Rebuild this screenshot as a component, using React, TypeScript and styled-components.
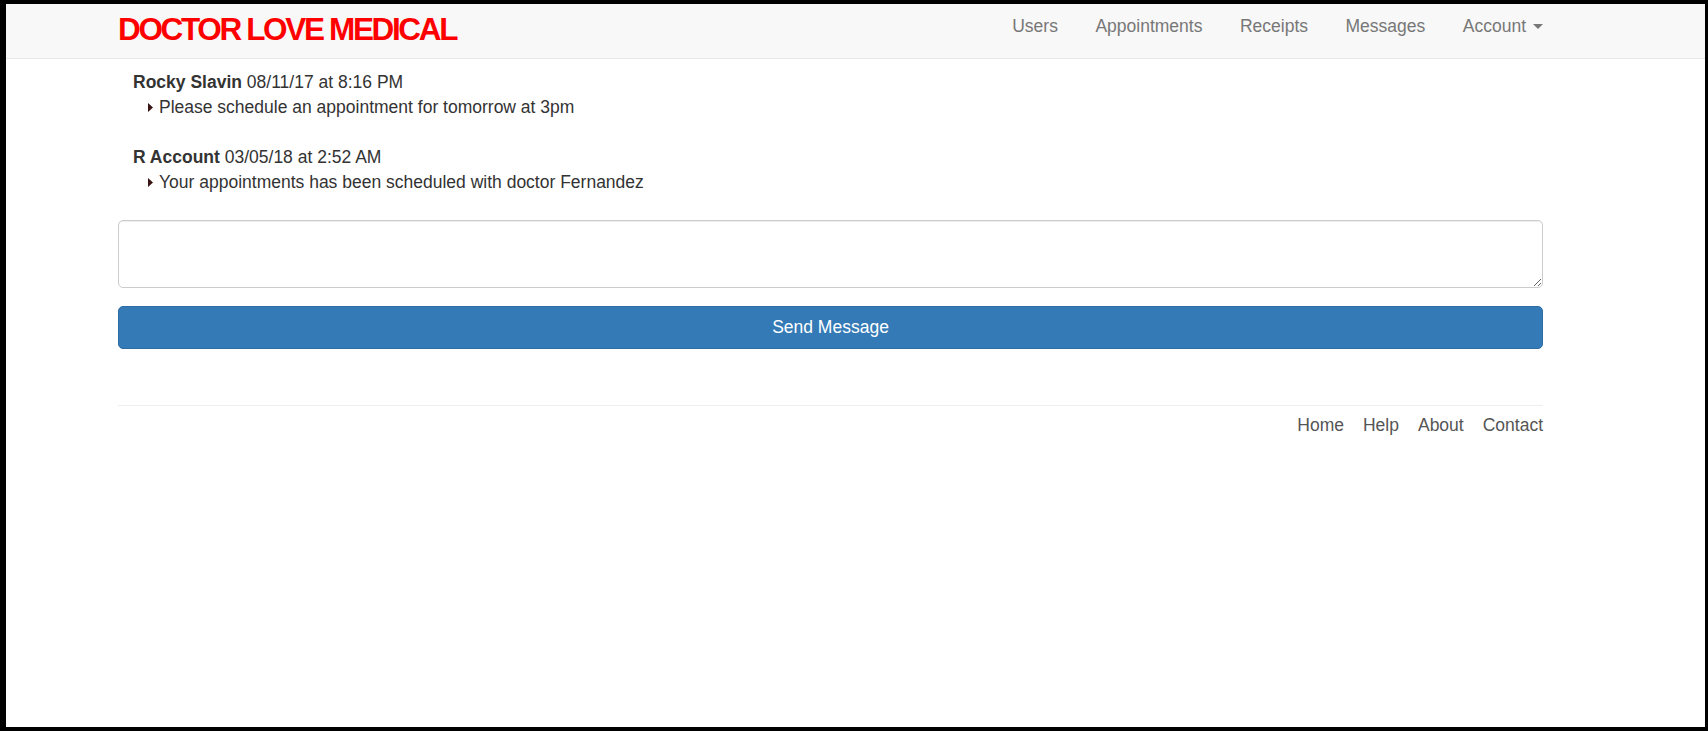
import React from "react";
import styled, { createGlobalStyle } from "styled-components";

const Global = createGlobalStyle`
  html, body { margin: 0; padding: 0; background: #ffffff; }
  body { font-family: "Liberation Sans", Arial, sans-serif; font-size: 17.5px; line-height: 25px; color: #333333; }
  * { box-sizing: border-box; }
`;

const Frame = styled.div`
  width: 1708px;
  height: 731px;
  border-style: solid;
  border-color: #000000;
  border-width: 4px 3px 4px 6px;
  background: #ffffff;
  overflow: hidden;
`;

const NavBar = styled.nav`
  height: 55px;
  background: #f8f8f8;
  border-bottom: 1px solid #e7e7e7;
`;

const Container = styled.div`
  margin-left: 112px;
  width: 1425px;
`;

const NavInner = styled(Container)`
  display: flex;
  justify-content: space-between;
  align-items: flex-start;
  padding-top: 9px;
`;

const Brand = styled.a`
  font-family: "Liberation Sans", Arial, sans-serif;
  font-weight: 700;
  font-size: 31.5px;
  letter-spacing: -2.35px;
  line-height: 30px;
  color: #ff0000;
  text-decoration: none;
  margin-top: 1px;
`;

const NavLinks = styled.ul`
  display: flex;
  list-style: none;
  margin: 0;
  padding: 0;
  gap: 37.5px;
  margin-top: 1px;
`;

const NavLink = styled.li`
  color: #777777;
  font-size: 17.5px;
  line-height: 25px;
  display: flex;
  align-items: center;
`;

const Caret = styled.span`
  display: inline-block;
  width: 0;
  height: 0;
  margin-left: 7px;
  border-top: 5px solid #777777;
  border-left: 5px solid transparent;
  border-right: 5px solid transparent;
`;

const MessageList = styled.div`
  padding: 11px 0 0 15px;
`;

const MessageItem = styled.div`
  margin-bottom: 25px;
`;

const MessageHead = styled.div`
  line-height: 25px;
`;

const Sender = styled.strong`
  font-weight: 700;
`;

const MessageBody = styled.div`
  display: flex;
  align-items: center;
  padding-left: 15px;
  gap: 6px;
  line-height: 25px;
`;

const Arrow = () => (
  <svg width="5" height="9" viewBox="0 0 5 9">
    <path d="M0 0 L5 4.5 L0 9 Z" fill="#3a1414" />
  </svg>
);

const Form = styled.div`
  display: flex;
  flex-direction: column;
  gap: 18px;
  margin-top: 0;
`;

const TextArea = styled.textarea`
  width: 100%;
  height: 68px;
  border: 1px solid #cccccc;
  border-radius: 5px;
  box-shadow: inset 0 1px 1px rgba(0, 0, 0, 0.075);
  font-family: "Liberation Sans", Arial, sans-serif;
  font-size: 17.5px;
  padding: 8px 15px;
  display: block;
  resize: vertical;
`;

const SendButton = styled.button`
  width: 100%;
  height: 43px;
  background: #337ab7;
  border: 1px solid #2e6da4;
  border-radius: 5px;
  color: #ffffff;
  font-family: "Liberation Sans", Arial, sans-serif;
  font-size: 17.5px;
  line-height: 25px;
  cursor: pointer;
`;

const Footer = styled.footer`
  margin-top: 56px;
  border-top: 1px solid #eeeeee;
  padding-top: 7px;
  display: flex;
  justify-content: flex-end;
  gap: 19px;
`;

const FooterLink = styled.a`
  color: #555555;
  text-decoration: none;
  font-size: 17.5px;
  line-height: 25px;
`;

const messages = [
  { from: "Rocky Slavin", when: "08/11/17 at 8:16 PM", text: "Please schedule an appointment for tomorrow at 3pm" },
  { from: "R Account", when: "03/05/18 at 2:52 AM", text: "Your appointments has been scheduled with doctor Fernandez" },
];

export default function App() {
  return (
    <>
      <Global />
      <Frame>
        <NavBar>
          <NavInner>
            <Brand>DOCTOR LOVE MEDICAL</Brand>
            <NavLinks>
              <NavLink>Users</NavLink>
              <NavLink>Appointments</NavLink>
              <NavLink>Receipts</NavLink>
              <NavLink>Messages</NavLink>
              <NavLink>
                Account<Caret />
              </NavLink>
            </NavLinks>
          </NavInner>
        </NavBar>
        <Container>
          <MessageList>
            {messages.map((m) => (
              <MessageItem key={m.from}>
                <MessageHead>
                  <Sender>{m.from}</Sender> {m.when}
                </MessageHead>
                <MessageBody>
                  <Arrow />
                  <span>{m.text}</span>
                </MessageBody>
              </MessageItem>
            ))}
          </MessageList>
          <Form>
            <TextArea />
            <SendButton>Send Message</SendButton>
          </Form>
          <Footer>
            <FooterLink>Home</FooterLink>
            <FooterLink>Help</FooterLink>
            <FooterLink>About</FooterLink>
            <FooterLink>Contact</FooterLink>
          </Footer>
        </Container>
      </Frame>
    </>
  );
}
